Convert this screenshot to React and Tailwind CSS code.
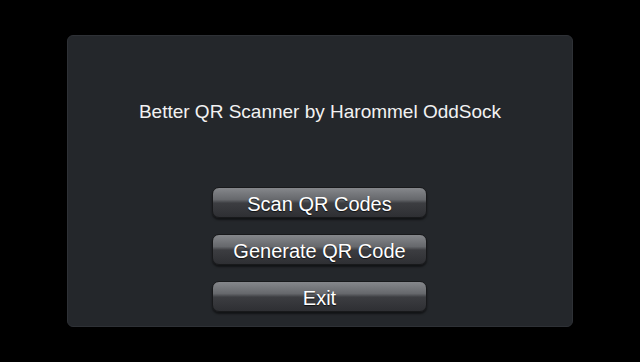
const BUTTONS = ['Scan QR Codes', 'Generate QR Code', 'Exit']

function MenuButton({ label }) {
  return (
    <button className="w-[215px] h-[31px] rounded-[7px] border border-[#18191b] bg-[linear-gradient(to_bottom,#85878b_0%,#66686c_40%,#3c3d41_52%,#2e2f33_100%)] shadow-[0_2px_2px_rgba(0,0,0,0.5)] flex items-center justify-center pt-[2px] text-white text-[20px] leading-none [text-shadow:0_1px_1px_rgba(0,0,0,0.7)]">
      {label}
    </button>
  )
}

export default function App() {
  return (
    <div className="w-[640px] h-[362px] bg-black pt-[35px] pl-[67px] font-['Liberation_Sans',Arial,sans-serif]">
      <div className="w-[506px] h-[292px] rounded-[6px] bg-[#24272b] border border-[#2e3136] shadow-[0_2px_3px_rgba(0,0,0,0.8)] flex flex-col items-center">
        <p className="mt-[66px] text-[#f2f2f2] text-[19px] leading-none">
          Better QR Scanner by Harommel OddSock
        </p>
        <div className="mt-[66px] flex flex-col items-center gap-[16px] ml-[-1px]">
          {BUTTONS.map(b => <MenuButton key={b} label={b} />)}
        </div>
      </div>
    </div>
  )
}
